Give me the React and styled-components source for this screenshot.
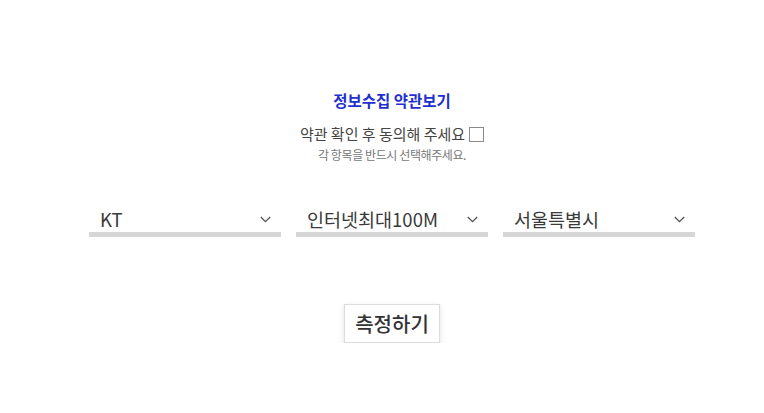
import styled, { createGlobalStyle } from "styled-components";

const Global = createGlobalStyle`
  body {
    margin: 0;
    background: #fff;
    font-family: "Noto Sans CJK KR", "Noto Sans", sans-serif;
  }
`;

const Page = styled.div`
  padding: 86px 0 0 20px;
  display: flex;
  flex-direction: column;
  align-items: center;
`;

const TermsLink = styled.a`
  font-size: 15.5px;
  font-weight: 700;
  color: #1f2fd0;
  line-height: 28px;
  text-decoration: none;
`;

const AgreeRow = styled.label`
  margin-top: 10px;
  display: flex;
  align-items: center;
  gap: 4px;
  font-size: 15px;
  color: #444;
  line-height: 20px;
`;

const Check = styled.span`
  width: 13px;
  height: 13px;
  border: 1px solid #8a8a8a;
  background: #fff;
`;

const Hint = styled.p`
  margin: 2px 0 0;
  font-size: 12px;
  color: #777;
  line-height: 18px;
  letter-spacing: -0.4px;
`;

const SelectRow = styled.div`
  margin-top: 42px;
  display: flex;
  gap: 15px;
`;

const SelectBox = styled.div`
  width: 192px;
  height: 31px;
  display: flex;
  align-items: center;
  justify-content: space-between;
  padding: 0 10px 0 11px;
  box-sizing: border-box;
  border-bottom: 5px solid #d6d6d6;
  font-size: 18.5px;
  color: #3a3a3a;
`;

const Button = styled.button`
  margin-top: 67px;
  width: 96px;
  height: 39px;
  border: 1px solid #dcdcdc;
  background: #fff;
  box-shadow: 0 2px 6px rgba(0, 0, 0, 0.12);
  font-family: inherit;
  font-size: 20px;
  font-weight: 500;
  color: #333;
  padding: 0;
`;

const Chevron = () => (
  <svg width="11" height="7" viewBox="0 0 11 7" fill="none">
    <path d="M0.8 1l4.7 4.7L10.2 1" stroke="#555" strokeWidth="1.3" />
  </svg>
);

const options = ["KT", "인터넷최대100M", "서울특별시"];

export default function App() {
  return (
    <>
      <Global />
      <Page>
        <TermsLink href="#">정보수집 약관보기</TermsLink>
        <AgreeRow>
          약관 확인 후 동의해 주세요 <Check />
        </AgreeRow>
        <Hint>각 항목을 반드시 선택해주세요.</Hint>
        <SelectRow>
          {options.map((o) => (
            <SelectBox key={o}>
              <span>{o}</span>
              <Chevron />
            </SelectBox>
          ))}
        </SelectRow>
        <Button>측정하기</Button>
      </Page>
    </>
  );
}
